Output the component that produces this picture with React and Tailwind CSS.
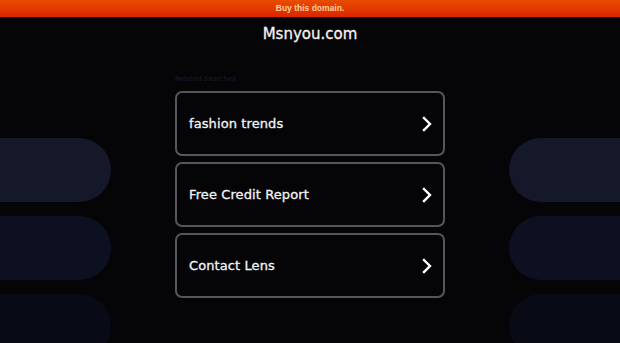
import React from 'react';

const links = ['fashion trends', 'Free Credit Report', 'Contact Lens'];

const pills = ['bg-[#141829]', 'bg-[#0d1020]', 'bg-[#080b15]'];

const Chevron = () => (
    <svg width="12" height="16" viewBox="0 0 12 16" fill="none">
        <path d="M3 2l6 6-6 6" stroke="#fff" strokeWidth="2.4" strokeLinecap="square" />
    </svg>
);

const App = () => {
    return (
        <div className="h-[343px] w-full overflow-hidden bg-[#050508]" style={{ fontFamily: '"DejaVu Sans", sans-serif' }}>
            {/* top banner */}
            <div className="h-[17px] bg-gradient-to-b from-[#e84c00] to-[#dd2200] text-center text-[8.5px] font-bold leading-[17px] text-[#ffd09a]" style={{ fontFamily: '"Liberation Sans", Arial, sans-serif' }}>
                Buy this domain.
            </div>

            <h1 className="h-[35px] text-center text-[15px] font-normal leading-[35px] text-[#f2f2f2] [-webkit-text-stroke:0.3px_#f2f2f2]">
                Msnyou.com
            </h1>

            <div className="flex justify-between">
                {/* left decoration */}
                <div className="flex w-[111px] flex-col gap-[14px] pt-[86px]">
                    {pills.map((c, i) => (
                        <div key={i} className={`h-[64px] w-full rounded-r-full ${c}`} />
                    ))}
                </div>

                {/* center list */}
                <div className="w-[270px] pt-[23px]">
                    <p className="mb-[8px] text-[7px] leading-[8px] text-[#1a1c2a]">Related Searches</p>
                    <div className="flex flex-col gap-[6px]">
                        {links.map((t) => (
                            <div key={t} className="flex h-[65px] items-center justify-between rounded-[7px] border-2 border-[#56565a] pl-[12px] pr-[10px]">
                                <span className="pt-[1px] text-[13px] font-normal tracking-[0.1px] text-[#f4f4f4] [-webkit-text-stroke:0.3px_#f4f4f4]">{t}</span>
                                <Chevron />
                            </div>
                        ))}
                    </div>
                </div>

                {/* right decoration */}
                <div className="flex w-[111px] flex-col gap-[14px] pt-[86px]">
                    {pills.map((c, i) => (
                        <div key={i} className={`h-[64px] w-full rounded-l-full ${c}`} />
                    ))}
                </div>
            </div>
        </div>
    );
};

export default App;
